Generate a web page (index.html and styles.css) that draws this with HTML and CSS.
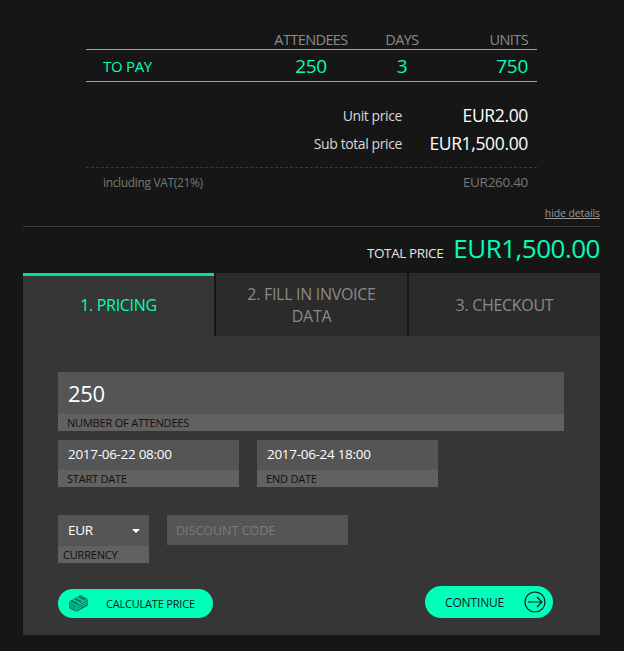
FILE: index.html
```html
<!DOCTYPE html>
<html lang="en">

<head>
    <meta charset="UTF-8">
    <meta name="viewport" content="width=device-width, initial-scale=1.0">
    <title>Checkout - Pricing</title>
    <link rel="stylesheet" href="styles.css">
</head>

<body>

    <!-- Price summary -->
    <div class="summary">
        <div class="summary-head">
            <span></span>
            <span class="center">ATTENDEES</span>
            <span class="center">DAYS</span>
            <span class="right">UNITS</span>
        </div>
        <div class="summary-row">
            <span class="to-pay">TO PAY</span>
            <span class="center">250</span>
            <span class="center">3</span>
            <span class="right">750</span>
        </div>

        <div class="price-lines">
            <div class="price-line">
                <span class="price-label">Unit price</span>
                <span class="price-value">EUR2.00</span>
            </div>
            <div class="price-line">
                <span class="price-label">Sub total price</span>
                <span class="price-value">EUR1,500.00</span>
            </div>
        </div>

        <div class="vat-line">
            <span>including VAT(21%)</span>
            <span class="vat-value">EUR260.40</span>
        </div>
    </div>

    <div class="details-link"><a href="#">hide details</a></div>

    <div class="total">
        <span class="total-label">TOTAL PRICE</span>
        <span class="total-value">EUR1,500.00</span>
    </div>

    <!-- Steps -->
    <div class="panel">
        <div class="tabs">
            <div class="tab active">1. PRICING</div>
            <div class="tab">2. FILL IN INVOICE DATA</div>
            <div class="tab">3. CHECKOUT</div>
        </div>

        <form class="pricing-form">
            <div class="field field-large">
                <div class="field-value">250</div>
                <label class="field-label">NUMBER OF ATTENDEES</label>
            </div>

            <div class="date-row">
                <div class="field field-date">
                    <div class="field-value">2017-06-22 08:00</div>
                    <label class="field-label">START DATE</label>
                </div>
                <div class="field field-date">
                    <div class="field-value">2017-06-24 18:00</div>
                    <label class="field-label">END DATE</label>
                </div>
            </div>

            <div class="currency-row">
                <div class="field field-currency">
                    <div class="field-value">EUR<span class="caret"></span></div>
                    <label class="field-label">CURRENCY</label>
                </div>
                <div class="discount">DISCOUNT CODE</div>
            </div>

            <div class="actions">
                <button type="button" class="btn btn-calc">
                    <svg class="money-icon" width="21" height="19" viewBox="0 0 21 19" fill="none">
                        <path d="M1 7.5 L12.5 1 L20 5 V11.5 L8.5 18 L1 14 Z" fill="#0d7f62" />
                        <path d="M1 7.5 L8.5 11.5 L20 5" stroke="#00ffbb" stroke-width="0.7" />
                        <path d="M1.5 10 L8.5 13.7 L19.5 7.5 M1.5 12 L8.5 15.7 L19.5 9.5" stroke="#00ffbb" stroke-width="0.6" />
                        <path d="M8.5 11.5 V18" stroke="#00ffbb" stroke-width="0.6" />
                        <path d="M5 5.5 L12.5 9.5 M8.5 3.5 L16 7.5" stroke="#00ffbb" stroke-width="1" />
                    </svg>
                    CALCULATE PRICE
                </button>
                <button type="button" class="btn btn-continue">
                    CONTINUE
                    <svg class="arrow-icon" width="22" height="22" viewBox="0 0 22 22" fill="none" stroke="#0c1a20" stroke-width="1.2">
                        <circle cx="11" cy="11" r="10" />
                        <path d="M4 11 H18 M13 6 L18 11 L13 16" />
                    </svg>
                </button>
            </div>
        </form>
    </div>

</body>

</html>
```

FILE: styles.css
```css
* {
    box-sizing: border-box;
    margin: 0;
    padding: 0;
    font-family: "Open Sans", "Noto Sans", sans-serif;
}

body {
    background: #161616;
    color: #fff;
    padding: 0 24px 0 23px;
    height: 651px;
    overflow: hidden;
}

.center {
    text-align: center;
}

.right {
    text-align: right;
}

/* summary table */
.summary {
    margin: 0 63px;
    padding-top: 30px;
}

.summary-head,
.summary-row {
    display: grid;
    grid-template-columns: 160px 96px 86px 83px;
    padding: 0 9px 0 17px;
}

.summary-head {
    height: 20px;
    line-height: 19px;
    font-size: 14.5px;
    letter-spacing: -0.6px;
    color: #8b8b8b;
    border-bottom: 1px solid #a0a0a0;
}

.summary-row {
    height: 32px;
    line-height: 32px;
    font-size: 19px;
    letter-spacing: -0.3px;
    color: #00ffb8;
    border-bottom: 1px solid #a0a0a0;
}

.to-pay {
    font-size: 15px;
}

.price-lines {
    padding: 19px 9px 0 0;
}

.price-line {
    display: flex;
    justify-content: flex-end;
    align-items: center;
    height: 28px;
}

.price-label {
    font-size: 14px;
    letter-spacing: -0.4px;
    color: #d8d8d8;
}

.price-value {
    width: 126px;
    text-align: right;
    font-size: 17.5px;
    font-weight: 500;
    letter-spacing: -0.35px;
}

.vat-line {
    display: flex;
    justify-content: space-between;
    margin-top: 10px;
    height: 30px;
    line-height: 29px;
    padding: 0 9px 0 17px;
    font-size: 12px;
    letter-spacing: -0.35px;
    color: #777;
    border-top: 1px dashed #3a3a3a;
}

.vat-value {
    font-size: 13.5px;
    letter-spacing: -0.3px;
}

.details-link {
    margin-top: 8px;
    height: 22px;
    line-height: 12px;
    text-align: right;
    border-bottom: 1px solid #3c3c3c;
}

.details-link a {
    font-size: 10.5px;
    letter-spacing: -0.1px;
    color: #9a9a9a;
}

.total {
    display: flex;
    justify-content: flex-end;
    align-items: baseline;
    gap: 10px;
    height: 46px;
    line-height: 42px;
}

.total-label {
    font-size: 13.5px;
    letter-spacing: -0.4px;
    color: #e4e4e4;
}

.total-value {
    font-size: 26px;
    letter-spacing: -0.5px;
    color: #00ffb8;
}

/* steps panel */
.panel {
    background: #363636;
    height: 362px;
}

.tabs {
    display: flex;
    gap: 2px;
    height: 63px;
    background: #161616;
}

.tab {
    flex: 1;
    display: flex;
    align-items: center;
    justify-content: center;
    padding: 0 16px;
    background: #2b2b2b;
    color: #8a8a8a;
    font-size: 16px;
    line-height: 22px;
    letter-spacing: -0.3px;
    text-align: center;
}

.tab.active {
    background: #363636;
    color: #00ffb8;
    border-top: 3px solid #00e0a4;
    padding-bottom: 3px;
}

.pricing-form {
    padding: 36px 36px 0 35px;
}

.field {
    background: #555;
}

.field-value {
    color: #fff;
    padding-left: 10px;
}

.field-label {
    display: block;
    height: 17px;
    line-height: 17px;
    padding-left: 9px;
    background: #616161;
    color: #101010;
    font-size: 11px;
    font-weight: 500;
    letter-spacing: -0.2px;
}

.field-large .field-value {
    height: 42px;
    line-height: 42px;
    font-size: 22px;
    letter-spacing: -0.3px;
}

.date-row {
    display: flex;
    gap: 18px;
    margin-top: 9px;
}

.field-date {
    width: 181px;
}

.field-date .field-value {
    height: 30px;
    line-height: 29px;
    font-size: 13.5px;
    letter-spacing: -0.3px;
}

.currency-row {
    display: flex;
    align-items: flex-start;
    gap: 18px;
    margin-top: 28px;
}

.field-currency {
    width: 91px;
}

.field-currency .field-value {
    position: relative;
    height: 31px;
    line-height: 31px;
    font-size: 13.5px;
    letter-spacing: -0.3px;
}

.field-currency .field-label {
    padding-left: 5px;
}

.caret {
    position: absolute;
    right: 9px;
    top: 14px;
    border-left: 4px solid transparent;
    border-right: 4px solid transparent;
    border-top: 4px solid #fff;
}

.discount {
    width: 181px;
    height: 30px;
    line-height: 31px;
    padding-left: 9px;
    background: #555;
    color: #7b7b7b;
    font-size: 12.5px;
}

.actions {
    display: flex;
    justify-content: space-between;
    align-items: center;
    margin-top: 23px;
    padding-right: 11px;
}

.btn {
    display: flex;
    align-items: center;
    border: none;
    background: #00ffbb;
    color: #0c1a20;
    cursor: pointer;
}

.btn-calc {
    width: 155px;
    height: 29px;
    margin-top: 2px;
    padding-left: 10px;
    border-radius: 15px;
    font-size: 11px;
    font-weight: 500;
    letter-spacing: -0.2px;
}

.money-icon {
    margin-right: 17px;
}

.btn-continue {
    width: 128px;
    height: 32px;
    padding-left: 20px;
    border-radius: 16px;
    font-size: 12px;
    font-weight: 500;
    letter-spacing: -0.15px;
}

.arrow-icon {
    margin-left: auto;
    margin-right: 7px;
}
```
